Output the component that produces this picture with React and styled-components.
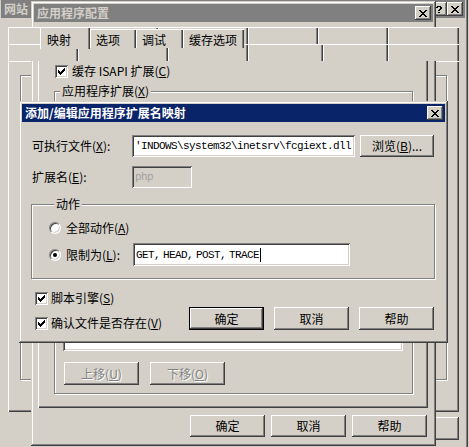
import styled, { createGlobalStyle, css } from "styled-components";

const FACE = "#d4d0c8";

const raised = css`
  box-shadow: inset -1px -1px #404040, inset 1px 1px #fff,
    inset -2px -2px #808080, inset 2px 2px ${FACE};
`;
const sunken = css`
  box-shadow: inset 1px 1px #808080, inset -1px -1px #fff,
    inset 2px 2px #404040, inset -2px -2px ${FACE};
`;

const GlobalStyle = createGlobalStyle`
  html, body { margin: 0; padding: 0; background: ${FACE}; }
  body {
    font-family: "Noto Sans CJK SC", "Liberation Sans", sans-serif;
    font-size: 12px;
    color: #000;
  }
  #root { width: 469px; height: 447px; overflow: hidden; }
  u { text-decoration-thickness: 1px; text-underline-offset: 1px; }
`;

const Desktop = styled.div`
  position: relative;
  width: 469px;
  height: 447px;
  overflow: hidden;
  background: ${FACE};
`;

const Window = styled.div`
  position: absolute;
  left: ${(p) => p.$x}px;
  top: ${(p) => p.$y}px;
  width: ${(p) => p.$w}px;
  height: ${(p) => p.$h}px;
  box-sizing: border-box;
  padding: 3px;
  background: ${FACE};
  box-shadow: inset -1px -1px #404040, inset 1px 1px ${FACE},
    inset -2px -2px #808080, inset 2px 2px #fff;
  display: flex;
  flex-direction: column;
`;

const TitleBar = styled.div`
  flex: none;
  height: 18px;
  display: flex;
  align-items: center;
  padding: 0 2px 0 3px;
  background: ${(p) => (p.$active ? "#0a246a" : "#808080")};
  color: ${(p) => (p.$active ? "#fff" : FACE)};
  font-weight: bold;
  font-size: 12px;
  white-space: nowrap;
  overflow: hidden;
`;

const TitleText = styled.span`
  flex: 1;
  line-height: 18px;
`;

const CapBtn = styled.span`
  flex: none;
  width: 16px;
  height: 14px;
  box-sizing: border-box;
  background: ${FACE};
  ${raised}
  display: flex;
  align-items: center;
  justify-content: center;
`;

const TabRow = styled.div`
  position: relative;
  z-index: 1;
  display: flex;
  align-items: flex-end;
  flex: none;
  height: ${(p) => p.$h || 21}px;
  margin-top: ${(p) => p.$mt || 0}px;
  padding-left: ${(p) => p.$pl || 0}px;
`;

const Tab = styled.div`
  box-sizing: border-box;
  flex: none;
  width: ${(p) => p.$w}px;
  height: ${(p) => (p.$on ? 22 : p.$h || 19)}px;
  margin-bottom: ${(p) => (p.$on ? -1 : 0)}px;
  padding: ${(p) => (p.$on ? "6px 0 0 7px" : "4px 0 0 6px")};
  line-height: 14px;
  white-space: nowrap;
  background: ${FACE};
  box-shadow: inset 1px 1px #fff, inset -1px 0 #404040, inset -2px 0 #808080;
`;

const Panel = styled.div`
  flex: none;
  box-sizing: border-box;
  width: ${(p) => p.$w}px;
  height: ${(p) => p.$h}px;
  margin-left: ${(p) => p.$ml || 0}px;
  padding: ${(p) => p.$pt || 0}px 0 0 ${(p) => p.$pl || 0}px;
  background: ${FACE};
  box-shadow: inset 1px 1px #fff, inset -1px -1px #404040,
    inset -2px -2px #808080;
`;

const GroupBox = styled.div`
  box-sizing: border-box;
  width: ${(p) => p.$w}px;
  height: ${(p) => p.$h}px;
  margin: ${(p) => p.$mt || 0}px 0 0 ${(p) => p.$ml || 0}px;
  border: 1px solid #808080;
  box-shadow: inset 1px 1px #fff, 1px 1px #fff;
  padding-left: ${(p) => p.$pl || 0}px;
`;

const Legend = styled.div`
  width: fit-content;
  height: 14px;
  line-height: 14px;
  margin: -8px 0 0 5px;
  padding: 0 2px;
  background: ${FACE};
  white-space: nowrap;
`;

const ListBox = styled.div`
  box-sizing: border-box;
  width: 340px;
  height: 250px;
  margin: 3px 0 0 8px;
  background: #fff;
  ${sunken}
`;

const Row = styled.div`
  display: flex;
  align-items: center;
  gap: ${(p) => p.$gap || 0}px;
  margin: ${(p) => p.$mt || 0}px 0 0 ${(p) => p.$ml || 0}px;
  height: ${(p) => (p.$h ? `${p.$h}px` : "auto")};
  width: ${(p) => (p.$w ? `${p.$w}px` : "auto")};
  flex: none;
  white-space: nowrap;
  line-height: 14px;
`;

const ButtonRow = styled.div`
  display: flex;
  justify-content: flex-end;
  gap: ${(p) => p.$gap || 6}px;
  margin-top: ${(p) => p.$mt || 0}px;
  padding-right: ${(p) => p.$pr || 0}px;
  flex: none;
`;

const Btn = styled.button`
  flex: none;
  width: ${(p) => p.$w || 75}px;
  height: ${(p) => p.$h || 23}px;
  box-sizing: border-box;
  border: 0;
  padding: 0;
  margin: 0 0 0 ${(p) => p.$ml || 0}px;
  background: ${FACE};
  font: inherit;
  line-height: 14px;
  color: #000;
  ${(p) =>
    p.$default
      ? css`
          box-shadow: inset 0 0 0 1px #000, inset -2px -2px #404040,
            inset 2px 2px #fff, inset -3px -3px #808080;
        `
      : raised}
  &:disabled {
    color: #808080;
    text-shadow: 1px 1px #fff;
  }
`;

const FieldLabel = styled.span`
  flex: none;
  width: ${(p) => p.$w}px;
  line-height: 14px;
  white-space: nowrap;
`;

const Field = styled.div`
  flex: none;
  box-sizing: border-box;
  width: ${(p) => p.$w}px;
  height: ${(p) => p.$h || 22}px;
  padding: 0 3px;
  display: flex;
  align-items: center;
  overflow: hidden;
  white-space: pre;
  background: ${(p) => (p.$disabled ? FACE : "#fff")};
  color: ${(p) => (p.$disabled ? "#a0a0a0" : "#000")};
  font-family: "Liberation Mono", "DejaVu Sans Mono", monospace;
  font-size: 11px;
  letter-spacing: -0.6px;
  word-spacing: ${(p) => p.$ws || 0}px;
  ${sunken}
`;

const Caret = styled.span`
  display: inline-block;
  width: 1px;
  height: 14px;
  margin-left: 1px;
  background: #000;
`;

const CheckBox = styled.span`
  flex: none;
  width: 13px;
  height: 13px;
  box-sizing: border-box;
  background: #fff;
  ${sunken}
  display: flex;
  align-items: center;
  justify-content: center;
`;

const Radio = styled.span`
  flex: none;
  width: 12px;
  height: 12px;
  box-sizing: border-box;
  border-radius: 50%;
  background: #fff;
  border: 1px solid;
  border-color: #808080 #fff #fff #808080;
  box-shadow: inset 1px 1px #404040, inset -1px -1px ${FACE};
  display: flex;
  align-items: center;
  justify-content: center;
  &::after {
    content: "";
    display: ${(p) => (p.$on ? "block" : "none")};
    width: 4px;
    height: 4px;
    border-radius: 50%;
    background: #000;
  }
`;

const Body = styled.div`
  flex: 1;
  display: flex;
  flex-direction: column;
  padding: ${(p) => p.$pad};
`;

const BottomArea = styled.div`
  display: flex;
  align-items: flex-end;
  justify-content: space-between;
  margin-top: ${(p) => p.$mt || 0}px;
`;

const CheckCol = styled.div`
  display: flex;
  flex-direction: column;
  gap: 11px;
  padding-left: 3px;
`;

const CLOSE = [
  "XX....XX",
  ".XX..XX.",
  "..XXXX..",
  "...XX...",
  "..XXXX..",
  ".XX..XX.",
  "XX....XX",
];
const HELP = [
  ".XXXX.",
  "XX..XX",
  "....XX",
  "...XX.",
  "..XX..",
  "......",
  "..XX..",
];
const CHECK = [
  "......X",
  ".....XX",
  "X...XXX",
  "XX.XXX.",
  "XXXXX..",
  ".XXX...",
  "..X....",
];

const PixelIcon = ({ rows, color = "#000" }) => (
  <svg
    width={rows[0].length}
    height={rows.length}
    shapeRendering="crispEdges"
    style={{ display: "block" }}
  >
    {rows.flatMap((r, y) =>
      [...r].map((c, x) =>
        c === "X" ? (
          <rect key={`${x}-${y}`} x={x} y={y} width={1} height={1} fill={color} />
        ) : null
      )
    )}
  </svg>
);

const Check = ({ children }) => (
  <Row $gap={3}>
    <CheckBox>
      <PixelIcon rows={CHECK} />
    </CheckBox>
    <span>{children}</span>
  </Row>
);

const BackWindow = () => (
  <Window $x={-2} $y={-3} $w={470} $h={458}>
    <TitleBar>
      <TitleText>网站</TitleText>
      <CapBtn>
        <PixelIcon rows={HELP} />
      </CapBtn>
      <CapBtn>
        <PixelIcon rows={CLOSE} />
      </CapBtn>
    </TitleBar>
    <TabRow $mt={9} $h={17} $pl={7}>
      {[80, 70, 90, 70, 70, 71].map((w, i) => (
        <Tab key={i} $w={w} $h={17} />
      ))}
    </TabRow>
    <TabRow $h={17} $pl={7}>
      {[70, 90, 80, 75, 65, 71].map((w, i) => (
        <Tab key={i} $w={w} $h={17} />
      ))}
    </TabRow>
    <Panel $w={451} $h={351} $ml={7}>
      <GroupBox $w={427} $h={305} $mt={14} $ml={12} />
    </Panel>
    <ButtonRow $mt={5} $pr={6}>
      <Btn>确定</Btn>
      <Btn>取消</Btn>
      <Btn>应用</Btn>
      <Btn>帮助</Btn>
    </ButtonRow>
  </Window>
);

const ConfigWindow = () => (
  <Window $x={31} $y={1} $w={405} $h={445}>
    <TitleBar>
      <TitleText>应用程序配置</TitleText>
      <CapBtn>
        <PixelIcon rows={CLOSE} />
      </CapBtn>
    </TitleBar>
    <TabRow $mt={5} $pl={6}>
      <Tab $w={50} $on>
        映射
      </Tab>
      <Tab $w={46}>选项</Tab>
      <Tab $w={47}>调试</Tab>
      <Tab $w={61}>缓存选项</Tab>
    </TabRow>
    <Panel $w={390} $h={360} $ml={4} $pt={16} $pl={16}>
      <Row $gap={4} $ml={1}>
        <CheckBox>
          <PixelIcon rows={CHECK} />
        </CheckBox>
        <span>
          缓存 ISAPI 扩展(<u>C</u>)
        </span>
      </Row>
      <GroupBox $w={359} $h={303} $mt={13}>
        <Legend>
          应用程序扩展(<u>X</u>)
        </Legend>
        <ListBox />
        <Row $gap={11} $mt={11} $ml={9}>
          <Btn disabled>
            上移(<u>U</u>)
          </Btn>
          <Btn disabled>
            下移(<u>O</u>)
          </Btn>
        </Row>
      </GroupBox>
    </Panel>
    <ButtonRow $mt={7} $pr={6}>
      <Btn $h={22}>确定</Btn>
      <Btn $h={22}>取消</Btn>
      <Btn $h={22}>帮助</Btn>
    </ButtonRow>
  </Window>
);

const MappingDialog = () => (
  <Window $x={19} $y={101} $w={429} $h={242}>
    <TitleBar $active>
      <TitleText>添加/编辑应用程序扩展名映射</TitleText>
      <CapBtn>
        <PixelIcon rows={CLOSE} />
      </CapBtn>
    </TitleBar>
    <Body $pad="13px 11px 0 10px">
      <Row $h={22}>
        <FieldLabel $w={100}>
          可执行文件(<u>X</u>):
        </FieldLabel>
        <Field $w={223}>'INDOWS\system32\inetsrv\fcgiext.dll</Field>
        <Btn $w={74} $h={22} $ml={5}>
          浏览(<u>B</u>)...
        </Btn>
      </Row>
      <Row $h={22} $mt={9}>
        <FieldLabel $w={100}>
          扩展名(<u>E</u>):
        </FieldLabel>
        <Field $w={60} $disabled>
          php
        </Field>
      </Row>
      <GroupBox $w={404} $h={75} $mt={16} $ml={-1} $pl={17}>
        <Legend>动作</Legend>
        <Row $mt={9} $h={16} $gap={5}>
          <Radio />
          <span>
            全部动作(<u>A</u>)
          </span>
        </Row>
        <Row $mt={7} $h={23}>
          <Row $gap={5} $w={84}>
            <Radio $on />
            <span>
              限制为(<u>L</u>):
            </span>
          </Row>
          <Field $w={217} $h={23} $ws={-3}>
            GET, HEAD, POST, TRACE
            <Caret />
          </Field>
        </Row>
      </GroupBox>
      <BottomArea $mt={12}>
        <CheckCol>
          <Check>
            脚本引擎(<u>S</u>)
          </Check>
          <Check>
            确认文件是否存在(<u>V</u>)
          </Check>
        </CheckCol>
        <ButtonRow $gap={10}>
          <Btn $default>确定</Btn>
          <Btn>取消</Btn>
          <Btn>帮助</Btn>
        </ButtonRow>
      </BottomArea>
    </Body>
  </Window>
);

const App = () => (
  <>
    <GlobalStyle />
    <Desktop>
      <BackWindow />
      <ConfigWindow />
      <MappingDialog />
    </Desktop>
  </>
);

export default App;
